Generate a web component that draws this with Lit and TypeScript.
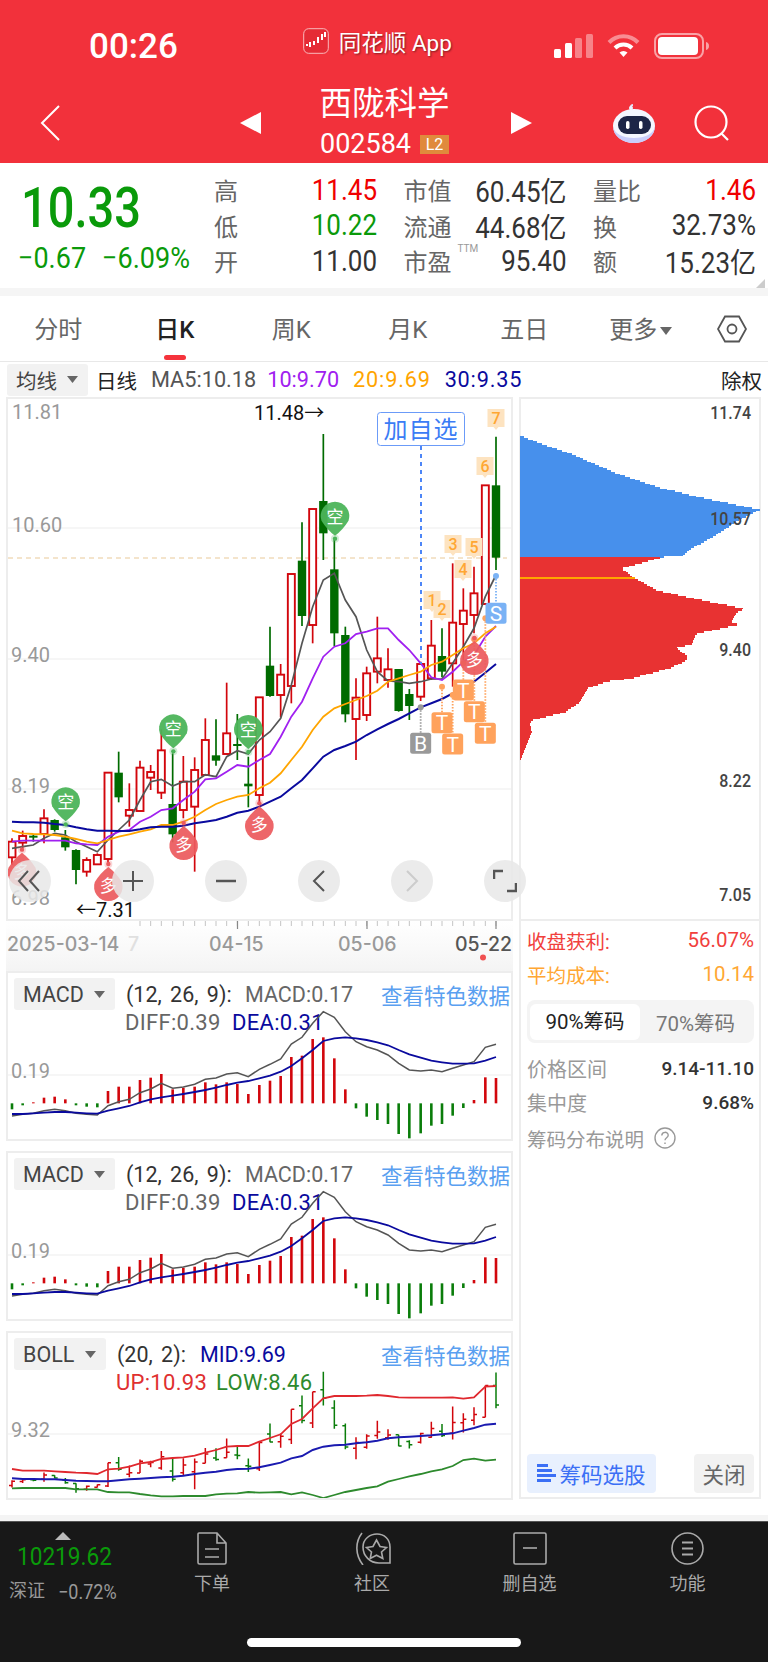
import { css, html, LitElement, svg } from "lit";
import { customElement } from "lit/decorators.js";

// every series is written in crop units: x = page x * 3, y = offset from a panel origin * 3
const X = [
  36, 68, 100, 132, 164, 196, 228, 260, 292, 324, 356, 388, 420, 452, 484, 518, 550, 584, 616, 648, 680, 712, 745, 778,
  810, 842, 874, 906, 938, 970, 1003, 1036, 1068, 1100, 1132, 1164, 1196, 1228, 1262, 1294, 1326, 1358, 1390, 1422,
  1456, 1488,
];

// [red?, wick top, body top, body bottom, wick bottom]
const CANDLES: [number, number, number, number, number][] = [
  [1, 715, 725, 772, 795], [1, 692, 708, 728, 745], [0, 705, 707, 713, 725], [1, 628, 655, 702, 730],
  [0, 658, 660, 690, 695], [0, 690, 712, 742, 752], [0, 748, 750, 810, 853], [1, 772, 780, 815, 830],
  [1, 760, 765, 793, 795], [1, 518, 518, 777, 790], [0, 455, 518, 592, 607], [1, 550, 630, 647, 680],
  [1, 482, 503, 633, 633], [1, 495, 516, 533, 570], [1, 388, 451, 578, 597], [0, 460, 612, 703, 727],
  [1, 468, 545, 630, 655], [1, 472, 510, 620, 815], [1, 355, 420, 525, 525], [0, 358, 466, 482, 497],
  [1, 248, 400, 462, 462], [0, 342, 432, 438, 480], [0, 470, 551, 559, 622], [1, 292, 292, 585, 610],
  [0, 80, 197, 288, 290], [1, 192, 224, 285, 352], [1, -78, -78, 258, 310], [0, -233, -118, 48, 78],
  [1, -273, -273, 75, 130], [0, -498, -297, -200, -120], [0, -180, -92, 100, 138], [0, 80, 105, 343, 367],
  [1, 235, 293, 357, 480], [1, 200, 220, 345, 363], [1, 50, 175, 215, 250], [1, 145, 208, 240, 263],
  [0, 207, 207, 333, 335], [0, 267, 282, 318, 360], [1, 185, 192, 290, 303], [1, 60, 137, 235, 240],
  [0, 85, 168, 215, 232], [1, -110, 68, 190, 260], [1, -35, 32, 72, 180], [1, -100, -20, 45, 100],
  [1, -344, -344, 12, 12], [0, -490, -344, -127, -90],
];

const MA5 = [
  745, 740, 735, 715, 700, 705, 725, 740, 755, 720, 690, 660, 600, 545, 538, 558, 545, 545, 524, 530, 470, 452, 462,
  420, 395, 355, 255, 130, 20, -60, -80, 0, 50, 150, 215, 243, 245, 250, 245, 237, 237, 190, 140, 85, -10, -75,
];
const MA10 = [
  725, 722, 722, 722, 722, 722, 730, 733, 735, 710, 695, 690, 665, 650, 630, 625, 600, 575, 538, 535, 515, 495, 500,
  480, 462, 410, 350, 305, 235, 170, 140, 130, 102, 95, 85, 85, 120, 150, 190, 232, 240, 215, 185, 165, 110, 78,
];
const MA20 = [
  692, 700, 702, 703, 705, 710, 717, 725, 730, 720, 710, 703, 695, 688, 675, 675, 665, 650, 630, 612, 600, 590, 585,
  565, 548, 520, 480, 440, 390, 350, 325, 312, 300, 288, 272, 245, 235, 225, 215, 195, 185, 165, 145, 130, 100, 80,
];
const MA30 = [
  665, 667, 667, 668, 672, 675, 682, 688, 692, 692, 693, 693, 688, 682, 680, 680, 677, 670, 665, 660, 650, 638, 632,
  620, 605, 590, 565, 540, 505, 470, 450, 438, 425, 405, 388, 372, 357, 340, 322, 310, 297, 280, 262, 245, 218, 192,
];

const HIST = [
  448, 436, 427, 413, 410, 418, 436, 440, 442, 393, 380, 380, 360, 353, 342, 388, 383, 380, 367, 373, 367, 372, 402,
  375, 362, 348, 291, 287, 237, 232, 295, 388, 445, 470, 480, 492, 522, 535, 520, 497, 492, 467, 444, 420, 352, 354,
];
const DIFF = [
  468, 463, 460, 452, 448, 452, 460, 463, 465, 437, 425, 418, 398, 387, 370, 385, 381, 373, 358, 354, 342, 338, 350,
  328, 313, 297, 252, 232, 190, 155, 172, 215, 245, 260, 270, 285, 310, 330, 333, 330, 335, 325, 315, 305, 262, 253,
];
const DEA = [
  462, 462, 460, 458, 456, 456, 458, 460, 461, 452, 445, 438, 427, 418, 412, 407, 402, 396, 390, 383, 375, 368, 363,
  355, 347, 335, 318, 295, 270, 243, 235, 232, 235, 240, 247, 256, 270, 283, 293, 302, 307, 311, 311, 310, 302, 291,
];

const BOLL_UP = [
  477, 482, 482, 482, 484, 486, 488, 489, 492, 478, 476, 470, 460, 456, 447, 444, 442, 437, 428, 420, 410, 408, 408,
  395, 384, 373, 342, 327, 295, 265, 258, 258, 258, 257, 255, 258, 262, 263, 263, 263, 263, 262, 266, 262, 230, 228,
];
const BOLL_MID = [
  505, 507, 507, 508, 508, 510, 512, 513, 514, 514, 511, 508, 506, 504, 502, 500, 497, 492, 488, 485, 480, 477, 476,
  472, 465, 458, 445, 438, 420, 410, 406, 404, 400, 397, 392, 385, 382, 380, 378, 376, 373, 370, 362, 354, 344, 341,
];
const BOLL_LOW = [
  535, 534, 534, 534, 534, 534, 538, 538, 538, 546, 547, 547, 552, 556, 559, 559, 558, 558, 558, 553, 551, 550, 546,
  548, 547, 546, 553, 547, 555, 564, 555, 546, 540, 534, 529, 515, 507, 499, 492, 484, 478, 468, 450, 446, 452, 449,
];

const BLUE_CHIPS: [number, number][] = [
  [30, 132], [75, 150], [180, 185], [310, 240], [450, 287], [585, 318], [750, 352], [690, 380], [605, 435], [540, 468],
  [520, 487], [450, 493],
];
const RED_CHIPS: [number, number][] = [
  [450, 494], [335, 525], [375, 555], [440, 590], [500, 603], [620, 628], [705, 645], [680, 655], [662, 683],
  [690, 692], [590, 712], [558, 720], [545, 750], [497, 760], [533, 785], [530, 797], [480, 820], [360, 852],
  [290, 860], [232, 880], [205, 925], [165, 950], [65, 975], [60, 985], [65, 1008], [30, 1095],
];

const RED = "#d2060c";
const GREEN = "#006b00";
const CHIP_Y = 2.958;
const my = (z: number) => 600 + z / 3;

function linePath(values: number[], toY: (z: number) => number) {
  return values.map((v, i) => `${i ? "L" : "M"}${(X[i] / 3).toFixed(1)} ${toY(v).toFixed(1)}`).join("");
}

// chip profile is stair-stepped like the bitmap it was drawn from
function stairPath(points: [number, number][]) {
  const step = 5;
  let d = `M520 ${390 + points[0][1] / CHIP_Y}`;
  let seg = 0;
  for (let y = points[0][1]; y <= points[points.length - 1][1]; y += step) {
    while (seg < points.length - 2 && points[seg + 1][1] < y) seg++;
    const [x0, y0] = points[seg];
    const [x1, y1] = points[seg + 1];
    const t = y1 === y0 ? 0 : Math.min(1, (y - y0) / (y1 - y0));
    const x = 510 + (x0 + (x1 - x0) * t) / 3;
    d += `H${x.toFixed(1)}V${(390 + (y + step) / CHIP_Y).toFixed(1)}`;
  }
  return `${d}H520Z`;
}

@customElement("app-root")
export class AppRoot extends LitElement {
  static override styles = css`
    :host {
      display: block;
      width: 768px;
      height: 1662px;
      overflow: hidden;
      background: #fff;
      color: #333;
      font-family: Roboto, "Noto Sans CJK SC", sans-serif;
    }

    .tall {
      display: inline-block;
      transform: scaleY(1.1);
    }

    /* header */
    .header {
      height: 163px;
      background: #f2313b;
      color: #fff;
    }
    .status {
      display: flex;
      align-items: center;
      height: 68px;
      padding-top: 12px;
    }
    .time {
      margin-left: 89px;
      font-size: 35px;
      font-weight: 500;
    }
    .app-name {
      display: flex;
      align-items: center;
      gap: 10px;
      margin: -10px 0 0 125px;
      font-size: 22.5px;
      text-shadow: 1px 1px 2px rgba(0, 0, 0, 0.45);
    }
    .status-icons {
      display: flex;
      align-items: center;
      gap: 14px;
      margin-left: auto;
      padding-right: 58px;
    }
    .nav {
      display: grid;
      grid-template-columns: 240px 292px 1fr;
      align-items: center;
      height: 83px;
    }
    .back {
      margin: 3px 0 0 40px;
    }
    .nav-center {
      display: flex;
      justify-content: space-between;
      align-items: center;
    }
    .nav-center > svg {
      margin-top: 3px;
    }
    .title-block {
      display: flex;
      flex-direction: column;
      align-items: center;
      height: 83px;
      padding: 4px 3px 0 0;
      box-sizing: border-box;
    }
    .title {
      font-size: 32.5px;
      line-height: 40px;
    }
    .code-row {
      display: flex;
      align-items: center;
      gap: 9px;
      height: 20px;
      margin-top: 10px;
      font-size: 27px;
    }
    .l2 {
      width: 29px;
      height: 19px;
      background: #e08a3c;
      font-size: 16px;
      line-height: 19px;
      text-align: center;
    }
    .nav-right {
      display: flex;
      align-items: center;
      gap: 38px;
      margin: 3px 0 0 80px;
    }

    /* quote */
    .quote {
      display: flex;
      height: 125px;
    }
    .price-block {
      width: 214px;
      padding: 20px 0 0 21px;
      box-sizing: border-box;
      color: #0a9a0a;
    }
    .price {
      height: 50px;
      font-size: 47px;
      font-weight: 500;
      line-height: 50px;
    }
    .price .tall {
      transform: scaleY(1.18);
    }
    .change {
      display: flex;
      gap: 16px;
      margin: 12px 0 0 -3px;
      font-size: 27px;
      line-height: 26px;
    }
    .stats {
      display: grid;
      grid-template-columns: repeat(3, 163px);
      grid-auto-rows: 35.5px;
      column-gap: 26.5px;
      padding-top: 9px;
    }
    .stat {
      display: flex;
      justify-content: space-between;
      align-items: center;
      font-size: 26px;
      color: #333;
    }
    .stat .label {
      color: #666;
      font-size: 24px;
    }
    .up {
      color: #f00000;
    }
    .down {
      color: #0a9a0a;
    }
    .ttm {
      position: relative;
    }
    .ttm sup {
      position: absolute;
      top: 1px;
      left: 54px;
      color: #999;
      font-size: 10px;
      line-height: 10px;
    }
    .corner {
      display: block;
      margin: -9px 0 0 756px;
    }
    .band {
      height: 8px;
      background: #f5f5f5;
    }

    /* period tabs */
    .tabs {
      display: grid;
      grid-template-columns: repeat(6, 116.5px) 1fr;
      align-items: center;
      height: 65px;
      border-bottom: 1px solid #e8e8e8;
      color: #666;
      font-size: 24px;
      text-align: center;
    }
    .tab {
      position: relative;
      height: 65px;
      line-height: 69px;
    }
    .tab.active {
      color: #222;
      font-weight: 500;
    }
    .tab.active::after {
      content: "";
      position: absolute;
      left: 47px;
      bottom: 1px;
      width: 22px;
      height: 5px;
      border-radius: 3px;
      background: #f5333c;
    }
    .more-arrow {
      margin-left: 3px;
      vertical-align: 3px;
    }
    .gear {
      margin-left: 18px;
    }

    /* MA legend */
    .legend {
      display: flex;
      align-items: center;
      height: 35px;
      padding: 0 6px 0 7px;
      font-size: 21.7px;
      box-sizing: border-box;
    }
    .picker {
      display: flex;
      align-items: center;
      justify-content: space-between;
      box-sizing: border-box;
      height: 32px;
      padding: 0 10px 0 9px;
      border-radius: 3px;
      background: #f2f2f2;
      color: #444;
    }
    .legend .picker {
      width: 81px;
      margin-right: 8px;
      font-size: 20.5px;
    }
    .day {
      font-size: 20.5px;
      color: #222;
    }
    .ma5 {
      margin: 0 11px 0 14px;
      color: #555;
    }
    .ma10 {
      margin-right: 14px;
      color: #a020f0;
    }
    .ma20 {
      margin-right: 14px;
      color: #ffa500;
      letter-spacing: 0.8px;
    }
    .ma30 {
      color: #0a0a9e;
      letter-spacing: 0.8px;
    }
    .adjust {
      margin-left: auto;
      color: #222;
      font-size: 20.5px;
    }

    /* chart columns */
    .board {
      display: grid;
      grid-template-columns: 507px 242px;
      column-gap: 6px;
      padding-left: 6px;
    }
    .left,
    .right {
      display: flex;
      flex-direction: column;
    }
    .frame {
      position: relative;
      box-sizing: border-box;
      border: 2px solid #ededed;
      background: #fff;
    }
    .frame svg.plot {
      display: block;
    }
    .main-frame {
      height: 524px;
    }
    .controls {
      position: absolute;
      z-index: 2;
      top: 461px;
      left: 1px;
      display: flex;
      gap: 51px;
    }
    .controls .round {
      display: flex;
      align-items: center;
      justify-content: center;
      width: 42px;
      height: 42px;
      border-radius: 50%;
      background: rgba(232, 232, 232, 0.85);
    }
    .controls .round:first-child {
      margin-right: 10px;
    }
    .dates {
      display: block;
      height: 50px;
      background: linear-gradient(#fff, #f4f4f4);
    }
    .macd-frame {
      height: 170px;
      margin-bottom: 10px;
    }
    .boll-frame {
      height: 169px;
    }
    .plot-under {
      position: absolute;
      top: 0;
      left: 0;
    }
    .ind-head {
      display: flex;
      align-items: center;
      height: 32px;
      margin: 5px 0 0 6px;
      font-size: 21.5px;
    }
    .ind-head .picker {
      width: 101px;
      margin-right: 11px;
    }
    .boll-frame .picker {
      width: 92px;
    }
    .params {
      width: 119px;
      color: #333;
      word-spacing: 3px;
    }
    .boll-frame .params {
      width: 83px;
    }
    .gray {
      color: #666;
    }
    .navy {
      color: #0a0a9e;
    }
    .link {
      margin-left: auto;
      padding-right: 1px;
      color: #5aa0f0;
      font-size: 21.5px;
    }
    .ind-sub {
      margin: 1px 0 0 117px;
      font-size: 22px;
      line-height: 24px;
      letter-spacing: 0.3px;
    }
    .ind-sub span:first-child {
      display: inline-block;
      width: 107px;
    }
    .boll-frame .ind-sub {
      margin-left: 108px;
    }
    .boll-frame .ind-sub span:first-child {
      width: 100px;
    }
    .ind-sub .red {
      color: #e03030;
    }
    .ind-sub .green {
      color: #2d8a2d;
    }

    /* right column */
    .chips {
      height: 524px;
    }
    .chip-info {
      display: flex;
      flex-direction: column;
      box-sizing: border-box;
      height: 578px;
      padding: 0 5px 4px 6px;
      border: 2px solid #ededed;
      border-top: 0;
      font-size: 19.5px;
      background: #fff;
    }
    .kv {
      display: flex;
      justify-content: space-between;
      align-items: center;
      height: 34px;
    }
    .kv.first {
      margin-top: 2px;
    }
    .profit {
      color: #f1403c;
    }
    .cost {
      color: #ffa733;
    }
    .num-big {
      font-size: 20.5px;
    }
    .seg {
      display: flex;
      align-items: center;
      height: 43px;
      margin: 9px 0 8px;
      padding: 0 3px;
      border-radius: 8px;
      background: #f4f4f4;
      color: #777;
      font-size: 20.5px;
    }
    .seg span {
      flex: 1;
      text-align: center;
    }
    .seg .on {
      flex: none;
      width: 110px;
      height: 36px;
      border-radius: 6px;
      background: #fff;
      color: #222;
      line-height: 36px;
    }
    .kv .key {
      color: #999;
      font-size: 20px;
    }
    .kv .val {
      color: #333;
      font-size: 19px;
      font-weight: 500;
    }
    .help {
      display: flex;
      align-items: center;
      gap: 10px;
      height: 34px;
      margin-top: 2px;
      color: #999;
    }
    .actions {
      display: flex;
      justify-content: space-between;
      margin-top: auto;
    }
    .pick,
    .close {
      display: flex;
      align-items: center;
      justify-content: center;
      height: 39px;
      border-radius: 4px;
      font-size: 21.5px;
    }
    .pick {
      gap: 3px;
      width: 129px;
      background: #e8f0fe;
      color: #3b6ff5;
    }
    .close {
      width: 60px;
      background: #f2f2f2;
      color: #666;
    }
    .strip {
      height: 6px;
      margin-top: 15px;
      background: #f4f4f4;
    }

    /* bottom bar */
    .footer {
      display: flex;
      flex-direction: column;
      height: 141px;
      background: #181818;
      border-top: 1px solid #555;
      box-sizing: border-box;
    }
    .dock {
      display: grid;
      grid-template-columns: 132px 160px 160px 155px 1fr;
      height: 116px;
      color: #aaa;
      font-size: 18px;
      text-align: center;
    }
    .index {
      padding: 10px 0 0 9px;
      text-align: left;
      color: #0a9a0a;
    }
    .index-arrow {
      display: block;
      margin-left: 46px;
    }
    .index-value {
      margin: 5px 0 0 8px;
      font-size: 22.6px;
      line-height: 24px;
    }
    .index-row {
      display: flex;
      align-items: center;
      gap: 13px;
      margin-top: 4px;
      font-size: 26.5px;
    }
    .index-row span:first-child {
      color: #999;
      font-size: 18px;
    }
    .dock-item {
      display: flex;
      flex-direction: column;
      align-items: center;
      gap: 4px;
      padding-top: 10px;
    }
    .home {
      width: 274px;
      height: 9px;
      margin: 0 auto;
      border-radius: 5px;
      background: #fff;
    }

    /* svg text */
    .axis {
      font-size: 20px;
      fill: #999;
    }
    .note {
      font-size: 20px;
      fill: #111;
    }
    .pin {
      font-size: 17px;
      fill: #fff;
      text-anchor: middle;
    }
    .num {
      font-size: 16px;
      font-weight: 500;
      fill: #ffa733;
      text-anchor: middle;
    }
    .tag {
      font-size: 21px;
      fill: #fff;
      text-anchor: middle;
    }
    .add {
      font-size: 24px;
      fill: #3b7cf5;
      text-anchor: middle;
      letter-spacing: 1px;
    }
    .date {
      font-family: Inter, sans-serif;
      font-size: 19.5px;
      fill: #999;
      font-weight: 500;
    }
    .chip-axis {
      font-size: 16px;
      font-weight: 500;
      fill: #444;
      text-anchor: end;
    }
  `;

  private candles() {
    return CANDLES.map(([red, wt, bt, bb, wb], i) => {
      const x = X[i] / 3;
      const color = red ? RED : GREEN;
      return svg`
        <line x1=${x} x2=${x} y1=${my(wt)} y2=${my(wb)} stroke=${color} stroke-width="1.7"></line>
        ${red
          ? svg`<rect x=${x - 3.5} y=${my(bt)} width="7" height=${(bb - bt) / 3} fill="#fff" stroke=${color} stroke-width="1.9"></rect>`
          : svg`<rect x=${x - 4.2} y=${my(bt)} width="8.4" height=${Math.max((bb - bt) / 3, 2)} fill=${color}></rect>`}
      `;
    });
  }

  private shortPin(zx: number, zy: number) {
    const x = zx / 3;
    const y = my(zy);
    return svg`
      <g>
        <path d="M${x - 13.5} ${y + 4}A14.3 14.3 0 1 1 ${x + 13.5} ${y + 4}Q${x + 8} ${y + 13} ${x} ${y + 19}Q${x - 8} ${y + 13} ${x - 13.5} ${y + 4}Z" fill="#4cb45a" fill-opacity="0.95"></path>
        <circle cx=${x} cy=${y + 22} r="4" fill="#4cb45a" fill-opacity="0.25"></circle>
        <circle cx=${x} cy=${y + 22} r="2.2" fill="#4cb45a"></circle>
        <text class="pin" x=${x} y=${y + 6}>空</text>
      </g>
    `;
  }

  private longPin(zx: number, zy: number) {
    const x = zx / 3;
    const y = my(zy);
    return svg`
      <g>
        <circle cx=${x} cy=${y - 22} r="4" fill="#ec5a5e" fill-opacity="0.25"></circle>
        <circle cx=${x} cy=${y - 22} r="2.2" fill="#ec5a5e"></circle>
        <path d="M${x - 13.5} ${y - 4}A14.3 14.3 0 1 0 ${x + 13.5} ${y - 4}Q${x + 8} ${y - 13} ${x} ${y - 19}Q${x - 8} ${y - 13} ${x - 13.5} ${y - 4}Z" fill="#ec5a5e" fill-opacity="0.93"></path>
        <text class="pin" x=${x} y=${y + 6}>多</text>
      </g>
    `;
  }

  private numTag(n: number, x: number, y: number) {
    return svg`
      <g>
        <path d="M${x - 8.5} ${y - 9}h17v18h-6l-2.500 3l-2.500 -3h-6Z" fill="#fde3c0"></path>
        <text class="num" x=${x} y=${y + 6}>${n}</text>
      </g>
    `;
  }

  private signalTag(zx: number, zy: number, topZ: number, label: string, fill: string) {
    const x = zx / 3;
    const y = my(zy);
    return svg`
      <g>
        <line x1=${x} x2=${x} y1=${my(topZ)} y2=${y} stroke=${fill} stroke-width="1.8" stroke-dasharray="1.500 1.500"></line>
        <circle cx=${x} cy=${my(topZ)} r="3" fill=${fill}></circle>
        <rect x=${x - 10.5} y=${y - 10.5} width="21" height="21" rx="2.500" fill=${fill}></rect>
        <text class="tag" x=${x} y=${y + 7.5}>${label}</text>
      </g>
    `;
  }

  private mainChart() {
    return html`
      <svg class="plot" width="503" height="520" viewBox="8 399 503 520">
        ${[528, 659, 789].map((y) => svg`<line x1="8" x2="511" y1=${y} y2=${y} stroke="#ededed" stroke-width="1"></line>`)}
        <line x1="8" x2="507" y1="558" y2="558" stroke="#e9c998" stroke-width="1" stroke-dasharray="5 4"></line>
        <text class="axis" x="12" y="419">11.81</text>
        <text class="axis" x="12" y="532">10.60</text>
        <text class="axis" x="11" y="662">9.40</text>
        <text class="axis" x="11" y="793">8.19</text>
        <text class="axis" x="11" y="905">6.98</text>
        ${this.candles()}
        <path d=${linePath(MA5, my)} fill="none" stroke="#555" stroke-width="1.7"></path>
        <path d=${linePath(MA10, my)} fill="none" stroke="#a020f0" stroke-width="1.8"></path>
        <path d=${linePath(MA20, my)} fill="none" stroke="#ffa500" stroke-width="1.8"></path>
        <path d=${linePath(MA30, my)} fill="none" stroke="#0a0a9e" stroke-width="2"></path>
        <text class="note" x="254" y="420">11.48→</text>
        <text class="note" x="76" y="917">←7.31</text>
        <line x1="421" x2="421" y1="446" y2="664" stroke="#4d86f7" stroke-width="2" stroke-dasharray="4 4"></line>
        <rect x="377.500" y="412.500" width="87" height="33" rx="3" fill="#fff" stroke="#6b9bf8" stroke-width="1"></rect>
        <text class="add" x="421" y="438">加自选</text>
        ${[[1, 432, 600], [2, 442, 609], [3, 453, 544], [4, 463, 569], [5, 474, 547], [6, 485, 466], [7, 496, 418]].map(
          ([n, x, y]) => this.numTag(n, x, y),
        )}
        ${this.shortPin(197, 607)} ${this.shortPin(520, 388)} ${this.shortPin(745, 390)} ${this.shortPin(1005, -250)}
        ${this.signalTag(1262, 430, 322, "B", "#999999")}
        ${this.signalTag(1390, 270, 190, "T", "#ffa25c")} ${this.signalTag(1326, 368, 260, "T", "#ffa25c")}
        ${this.signalTag(1358, 432, 285, "T", "#ffa25c")} ${this.signalTag(1423, 335, 118, "T", "#ffa25c")}
        ${this.signalTag(1456, 400, 55, "T", "#ffa25c")} ${this.signalTag(1488, 40, -72, "S", "#7ab2f5")}
        ${this.longPin(66, 815)} ${this.longPin(325, 858)} ${this.longPin(551, 735)} ${this.longPin(778, 676)}
        ${this.longPin(1423, 180)}
      </svg>
      <div class="controls">
        <div class="round">
          <svg width="26" height="26" viewBox="0 0 26 26" fill="none" stroke="#555" stroke-width="2">
            <path d="M11 3 2 13l9 10M22 3l-9 10 9 10"></path>
          </svg>
        </div>
        <div class="round">
          <svg width="22" height="22" viewBox="0 0 22 22" fill="none" stroke="#555" stroke-width="2">
            <path d="M1 11h20M11 1v20"></path>
          </svg>
        </div>
        <div class="round">
          <svg width="22" height="4" viewBox="0 0 22 4" fill="none" stroke="#555" stroke-width="2.500">
            <path d="M1 2h20"></path>
          </svg>
        </div>
        <div class="round">
          <svg width="14" height="24" viewBox="0 0 14 24" fill="none" stroke="#555" stroke-width="2">
            <path d="M12 2 2 12l10 10"></path>
          </svg>
        </div>
        <div class="round">
          <svg width="14" height="24" viewBox="0 0 14 24" fill="none" stroke="#ccc" stroke-width="2">
            <path d="m2 2 10 10L2 22"></path>
          </svg>
        </div>
        <div class="round">
          <svg width="24" height="24" viewBox="0 0 24 24" fill="none" stroke="#555" stroke-width="2.500">
            <path d="M1 10V2h9M23 14v8h-9"></path>
          </svg>
        </div>
      </div>
    `;
  }

  private dateAxis() {
    const minor = X.filter((x) => x >= 420);
    return html`
      <svg class="dates" width="507" height="50" viewBox="6 921 507 50">
        ${minor.map((x) => svg`<line x1=${x / 3} x2=${x / 3} y1="921" y2="926" stroke="#c4c4c4" stroke-width="1"></line>`)}
        ${[237.500, 367, 496].map((x) => svg`<line x1=${x} x2=${x} y1="921" y2="929" stroke="#888" stroke-width="1.200"></line>`)}
        <text class="date" x="7" y="951">2025-03-14</text>
        <text class="date" x="128" y="951" style="fill:#e0e0e0">7</text>
        <text class="date" x="209" y="951">04-15</text>
        <text class="date" x="338" y="951">05-06</text>
        <text class="date" x="455" y="951" style="fill:#555">05-22</text>
        <circle cx="483" cy="957.500" r="3" fill="#f05050"></circle>
      </svg>
    `;
  }

  private macdPanel() {
    const y = (z: number) => 960 + z / 3;
    const zero = 430;
    return html`
      <div class="frame macd-frame">
        <div class="ind-head">
          <div class="picker">
            MACD
            <svg width="11" height="7" viewBox="0 0 11 7"><path d="M0 0h11L5.500 7z" fill="#666"></path></svg>
          </div>
          <span class="params">(12, 26, 9):</span>
          <span class="gray">MACD:0.17</span>
          <span class="link">查看特色数据</span>
        </div>
        <div class="ind-sub"><span class="gray">DIFF:0.39</span><span class="navy">DEA:0.31</span></div>
        <svg class="plot plot-under" width="503" height="166" viewBox="8 973 503 166">
          <line x1="8" x2="511" y1="1075" y2="1075" stroke="#ededed" stroke-width="1"></line>
          <text class="axis" x="11" y="1078">0.19</text>
          ${HIST.map((top, i) => {
            const below = top > zero;
            return svg`<rect x=${X[i] / 3 - 1.3} y=${below ? y(zero) : y(top)} width="2.600"
              height=${Math.abs(zero - top) / 3} fill=${below ? "#0a7d0a" : RED}></rect>`;
          })}
          <path d=${linePath(DIFF, y)} fill="none" stroke="#555" stroke-width="1.500"></path>
          <path d=${linePath(DEA, y)} fill="none" stroke="#0a0a9e" stroke-width="1.800"></path>
        </svg>
      </div>
    `;
  }

  private bollPanel() {
    const y = (z: number) => 1310 + z / 3;
    const map = (z: number) => 185 + (z + 498) * 0.2688;
    return html`
      <div class="frame boll-frame">
        <div class="ind-head">
          <div class="picker">
            BOLL
            <svg width="11" height="7" viewBox="0 0 11 7"><path d="M0 0h11L5.500 7z" fill="#666"></path></svg>
          </div>
          <span class="params">(20, 2):</span>
          <span class="navy">MID:9.69</span>
          <span class="link">查看特色数据</span>
        </div>
        <div class="ind-sub"><span class="red">UP:10.93</span><span class="green">LOW:8.46</span></div>
        <svg class="plot plot-under" width="503" height="165" viewBox="8 1333 503 165">
          <line x1="8" x2="511" y1="1434" y2="1434" stroke="#ededed" stroke-width="1"></line>
          <text class="axis" x="11" y="1437">9.32</text>
          ${CANDLES.map(([red, wt, bt, bb, wb], i) => {
            const x = X[i] / 3;
            const color = red ? "#d2060c" : "#0a7d0a";
            const open = y(map(red ? bb : bt));
            const close = y(map(red ? bt : bb));
            return svg`<path d="M${x} ${y(map(wt))}V${y(map(wb))}M${x - 3} ${open}H${x}M${x} ${close}H${x + 3}"
              fill="none" stroke=${color} stroke-width="1.500"></path>`;
          })}
          <path d=${linePath(BOLL_UP, y)} fill="none" stroke="#e0282e" stroke-width="1.800"></path>
          <path d=${linePath(BOLL_MID, y)} fill="none" stroke="#1a1ab0" stroke-width="1.900"></path>
          <path d=${linePath(BOLL_LOW, y)} fill="none" stroke="#2d8a2d" stroke-width="1.800"></path>
        </svg>
      </div>
    `;
  }

  private chipChart() {
    const axis = (label: string, y: number) =>
      svg`<text class="chip-axis" transform="translate(751 ${y}) scale(1 1.15)">${label}</text>`;
    return html`
      <svg class="plot" width="238" height="520" viewBox="521 399 238 520" style="overflow:visible">
        <path d=${stairPath(BLUE_CHIPS)} fill="#4790ec" shape-rendering="crispEdges"></path>
        <path d=${stairPath(RED_CHIPS)} fill="#e83232" shape-rendering="crispEdges"></path>
        <rect x="520" y="577" width="115" height="2" fill="#ffa500"></rect>
        ${axis("11.74", 418.5)} ${axis("10.57", 525)} ${axis("9.40", 656)} ${axis("8.22", 787)} ${axis("7.05", 901)}
      </svg>
    `;
  }

  override render() {
    const tall = (text: string) => html`<span class="tall">${text}</span>`;
    return html`
      <div class="header">
        <div class="status">
          <span class="time">00:26</span>
          <div class="app-name">
            <svg width="26" height="26" viewBox="0 0 26 26">
              <rect x="0.700" y="0.700" width="24.600" height="24.600" rx="5" fill="#e52b35" stroke="#f9b9bc" stroke-width="1"></rect>
              <path d="M3 17h2M7 14v5M11 13v4M15 9v6M19 6v6M22 4v5" stroke="#fff" stroke-width="2" fill="none"></path>
            </svg>
            同花顺 App
          </div>
          <div class="status-icons">
            <svg width="39" height="24" viewBox="0 0 39 24" fill="#fff">
              <rect x="0" y="15" width="7" height="9" rx="1.500"></rect>
              <rect x="11" y="9" width="7" height="15" rx="1.500"></rect>
              <rect x="21" y="4" width="7" height="20" rx="1.500" opacity="0.4"></rect>
              <rect x="32" y="0" width="7" height="24" rx="1.500" opacity="0.4"></rect>
            </svg>
            <svg width="33" height="24" viewBox="0 0 33 24" fill="none" stroke-linecap="butt">
              <path d="M2 8.500a20 20 0 0 1 29 0" stroke="#fff" stroke-opacity="0.45" stroke-width="4"></path>
              <path d="M8 14a12 12 0 0 1 17 0" stroke="#fff" stroke-width="4"></path>
              <path d="M12.500 18.500 16.500 23l4-4.500a6 6 0 0 0-8 0Z" fill="#fff"></path>
            </svg>
            <svg width="56" height="26" viewBox="0 0 56 26">
              <rect x="1" y="1" width="48" height="24" rx="7" fill="none" stroke="#fff" stroke-opacity="0.55" stroke-width="2"></rect>
              <rect x="4" y="4" width="40" height="18" rx="4" fill="#fff"></rect>
              <path d="M52 9c2 .6 3 2 3 4s-1 3.400-3 4z" fill="#fff" fill-opacity="0.55"></path>
            </svg>
          </div>
        </div>
        <div class="nav">
          <svg class="back" width="20" height="36" viewBox="0 0 20 36" fill="none" stroke="#fff" stroke-width="2">
            <path d="M19 1 2 18l17 17"></path>
          </svg>
          <div class="nav-center">
            <svg width="21" height="22" viewBox="0 0 21 22"><path d="M21 0v22L0 11z" fill="#fff"></path></svg>
            <div class="title-block">
              <div class="title">西陇科学</div>
              <div class="code-row">002584<span class="l2">L2</span></div>
            </div>
            <svg width="21" height="22" viewBox="0 0 21 22"><path d="M0 0v22l21-11z" fill="#fff"></path></svg>
          </div>
          <div class="nav-right">
            <svg width="44" height="40" viewBox="0 0 44 40">
              <path d="M19 7c-1-3 0-5 2-5" fill="none" stroke="#dfe5fb" stroke-width="2"></path>
              <circle cx="19" cy="5" r="2" fill="#eef1ff"></circle>
              <ellipse cx="22" cy="23" rx="21" ry="17" fill="#f4f6ff"></ellipse>
              <path d="M1 23c0 10 9 17 21 17s21-7 21-17c-1 8-10 12-21 12S2 31 1 23Z" fill="#c9cdfb"></path>
              <rect x="6" y="13" width="33" height="18" rx="9" fill="#1d2547"></rect>
              <rect x="14" y="18" width="3.500" height="8" rx="1.700" fill="#fff"></rect>
              <rect x="27" y="18" width="3.500" height="8" rx="1.700" fill="#fff"></rect>
            </svg>
            <svg width="36" height="36" viewBox="0 0 36 36" fill="none" stroke="#fff" stroke-width="2.200">
              <circle cx="17" cy="17" r="15.500"></circle>
              <path d="m27 28 7 7"></path>
            </svg>
          </div>
        </div>
      </div>

      <div class="quote">
        <div class="price-block">
          <div class="price">${tall("10.33")}</div>
          <div class="change">${tall("−0.67")}${tall("−6.09%")}</div>
        </div>
        <div class="stats">
          <div class="stat"><span class="label">高</span><span class="up">${tall("11.45")}</span></div>
          <div class="stat"><span class="label">市值</span><span>${tall("60.45亿")}</span></div>
          <div class="stat"><span class="label">量比</span><span class="up">${tall("1.46")}</span></div>
          <div class="stat"><span class="label">低</span><span class="down">${tall("10.22")}</span></div>
          <div class="stat"><span class="label">流通</span><span>${tall("44.68亿")}</span></div>
          <div class="stat"><span class="label">换</span><span>${tall("32.73%")}</span></div>
          <div class="stat"><span class="label">开</span><span>${tall("11.00")}</span></div>
          <div class="stat"><span class="label ttm">市盈<sup>TTM</sup></span><span>${tall("95.40")}</span></div>
          <div class="stat"><span class="label">额</span><span>${tall("15.23亿")}</span></div>
        </div>
      </div>
      <svg class="corner" width="9" height="9" viewBox="0 0 9 9"><path d="M9 0v9H0z" fill="#ccc"></path></svg>
      <div class="band"></div>

      <div class="tabs">
        <div class="tab">分时</div>
        <div class="tab active">日K</div>
        <div class="tab">周K</div>
        <div class="tab">月K</div>
        <div class="tab">五日</div>
        <div class="tab">
          更多<svg class="more-arrow" width="12" height="8" viewBox="0 0 12 8"><path d="M0 0h12L6 8z" fill="#666"></path></svg>
        </div>
        <svg class="gear" width="30" height="28" viewBox="0 0 30 28" fill="none" stroke="#555" stroke-width="1.800">
          <path d="M8 1.500h14L29 14l-7 12.500H8L1 14Z"></path>
          <circle cx="15" cy="14" r="4.500"></circle>
        </svg>
      </div>

      <div class="legend">
        <div class="picker">
          均线
          <svg width="11" height="7" viewBox="0 0 11 7"><path d="M0 0h11L5.500 7z" fill="#666"></path></svg>
        </div>
        <span class="day">日线</span>
        <span class="ma5">MA5:10.18</span>
        <span class="ma10">10:9.70</span>
        <span class="ma20">20:9.69</span>
        <span class="ma30">30:9.35</span>
        <span class="adjust">除权</span>
      </div>

      <div class="board">
        <div class="left">
          <div class="frame main-frame">${this.mainChart()}</div>
          ${this.dateAxis()} ${this.macdPanel()} ${this.macdPanel()} ${this.bollPanel()}
        </div>
        <div class="right">
          <div class="frame chips">${this.chipChart()}</div>
          <div class="chip-info">
            <div class="kv first profit"><span>收盘获利:</span><span class="num-big">56.07%</span></div>
            <div class="kv cost"><span>平均成本:</span><span class="num-big">10.14</span></div>
            <div class="seg"><span class="on">90%筹码</span><span>70%筹码</span></div>
            <div class="kv"><span class="key">价格区间</span><span class="val">9.14-11.10</span></div>
            <div class="kv"><span class="key">集中度</span><span class="val">9.68%</span></div>
            <div class="help">
              筹码分布说明
              <svg width="22" height="22" viewBox="0 0 22 22" fill="none" stroke="#999" stroke-width="1.400">
                <circle cx="11" cy="11" r="10"></circle>
                <path d="M7.800 8.500c0-4.200 6.400-4.200 6.400-.2 0 2.500-3.200 2.500-3.200 5"></path>
                <path d="M11 15.500v1.500"></path>
              </svg>
            </div>
            <div class="actions">
              <div class="pick">
                <svg width="19" height="19" viewBox="0 0 19 19" fill="#3b6ff5">
                  <rect x="0" y="0" width="11" height="3"></rect>
                  <rect x="0" y="5" width="15" height="3"></rect>
                  <rect x="0" y="10" width="19" height="3"></rect>
                  <rect x="0" y="15" width="14" height="3"></rect>
                </svg>
                筹码选股
              </div>
              <div class="close">关闭</div>
            </div>
          </div>
        </div>
      </div>
      <div class="strip"></div>

      <div class="footer">
        <div class="dock">
          <div class="index">
            <svg class="index-arrow" width="16" height="8" viewBox="0 0 16 8"><path d="M8 0l8 8H0z" fill="#bbb"></path></svg>
            <div class="index-value">${tall("10219.62")}</div>
            <div class="index-row"><span>深证</span><span>${tall("−0.72%")}</span></div>
          </div>
          <div class="dock-item">
            <svg width="30" height="33" viewBox="0 0 30 33" fill="none" stroke="#aaa" stroke-width="1.600">
              <path d="M2 1h18l9 10v19.500a1.500 1.500 0 0 1-1.500 1.500H2.500A1.500 1.500 0 0 1 1 30.500V2A1 1 0 0 1 2 1ZM20 1v10h9M8 17h14M8 25h14"></path>
            </svg>
            下单
          </div>
          <div class="dock-item">
            <svg width="37" height="33" viewBox="0 0 37 33" fill="none" stroke="#aaa" stroke-width="1.600">
              <path d="M8 1C1 10 1 23 9 33"></path>
              <path d="M36 31V15C36 7 30 2 23 2S9 7 9 15c0 9 7 16 16 16Z"></path>
              <path d="m22.500 8 3.500 6.500 6.500 1-5 4.500 1.300 6.500-6.300-3.300-6.300 3.300 1.300-6.500-5-4.500 6.500-1Z"></path>
            </svg>
            社区
          </div>
          <div class="dock-item">
            <svg width="34" height="33" viewBox="0 0 34 33" fill="none" stroke="#aaa" stroke-width="1.600">
              <rect x="1" y="1" width="32" height="31" rx="1.500"></rect>
              <path d="M10 16h14"></path>
            </svg>
            删自选
          </div>
          <div class="dock-item">
            <svg width="33" height="33" viewBox="0 0 33 33" fill="none" stroke="#aaa" stroke-width="1.600">
              <circle cx="16.500" cy="16.500" r="15.500"></circle>
              <path d="M11 10.500h11M11 16.500h11M11 22.500h11" stroke-width="2.200"></path>
            </svg>
            功能
          </div>
        </div>
        <div class="home"></div>
      </div>
    `;
  }
}
